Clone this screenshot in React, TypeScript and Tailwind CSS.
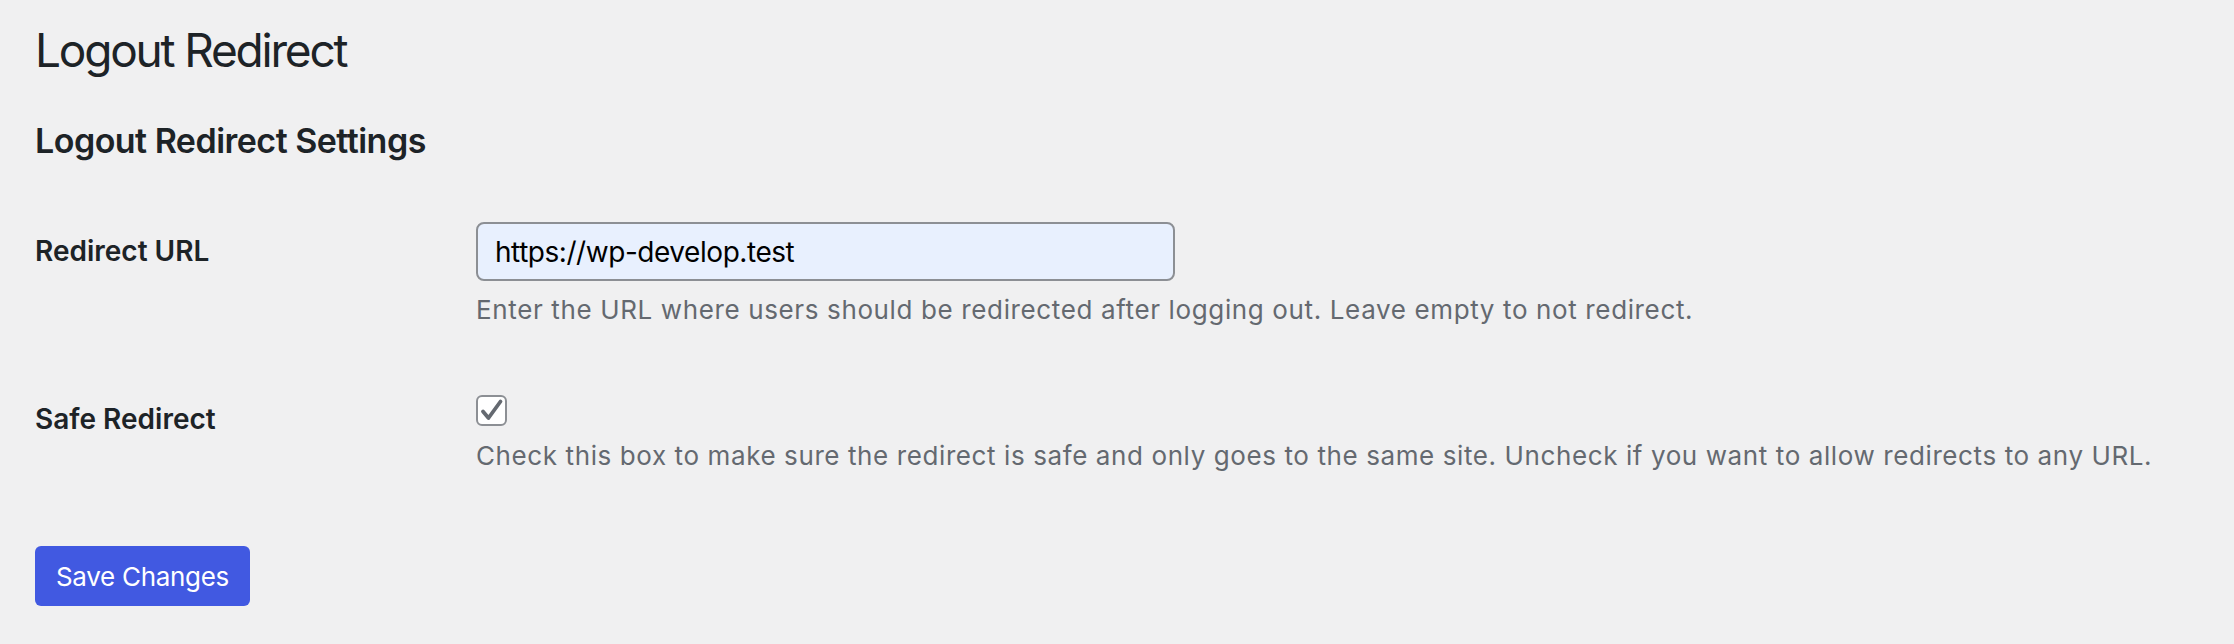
export default function App() {
  return (
    <div
      className="min-h-[644px] w-full bg-[#f0f0f1] pl-[35px] pt-[20px] text-[#1d2327]"
      style={{ fontFamily: "Inter, 'Noto Sans', sans-serif" }}
    >
      <h1 className="text-[46px] leading-[60px] font-normal tracking-[-2.2px]">Logout Redirect</h1>
      <h2 className="mt-[39px] text-[34px] leading-[44px] font-semibold tracking-[-0.52px]">Logout Redirect Settings</h2>

      {/* Redirect URL */}
      <div className="mt-[59px] flex">
        <div className="w-[441px] shrink-0 pt-[9px] text-[28px] leading-[40px] font-semibold">Redirect URL</div>
        <div className="flex flex-col">
          <div className="flex h-[59px] w-[699px] items-center rounded-[8px] border-2 border-[#8c8f94] bg-[#e8f0fe] px-[17px] text-[28px] tracking-[-0.45px] text-black">
            https://wp-develop.test
          </div>
          <p className="mt-[11px] text-[26px] leading-[36px] tracking-[0.63px] text-[#646970]">
            Enter the URL where users should be redirected after logging out. Leave empty to not redirect.
          </p>
        </div>
      </div>

      {/* Safe Redirect */}
      <div className="mt-[67px] flex">
        <div className="w-[441px] shrink-0 pt-[4px] text-[28px] leading-[40px] font-semibold">Safe Redirect</div>
        <div className="flex flex-col">
          <span className="flex h-[31px] w-[31px] items-center justify-center rounded-[6px] border-2 border-[#8c8f94] bg-white">
            <svg width="27" height="27" viewBox="0 0 27 27" fill="none">
              <path d="M5 14.5 L10.5 21 L22.5 4.5" stroke="#646970" strokeWidth="3.8" strokeLinecap="round" strokeLinejoin="round" />
            </svg>
          </span>
          <p className="mt-[12px] text-[26px] leading-[36px] tracking-[0.6px] text-[#646970]">
            Check this box to make sure the redirect is safe and only goes to the same site. Uncheck if you want to allow redirects to any URL.
          </p>
        </div>
      </div>

      <button className="mt-[72px] flex h-[60px] w-[215px] items-center justify-center rounded-[6px] bg-[#4159e1] text-[26px] tracking-[-0.3px] text-white">
        Save Changes
      </button>
    </div>
  );
}
